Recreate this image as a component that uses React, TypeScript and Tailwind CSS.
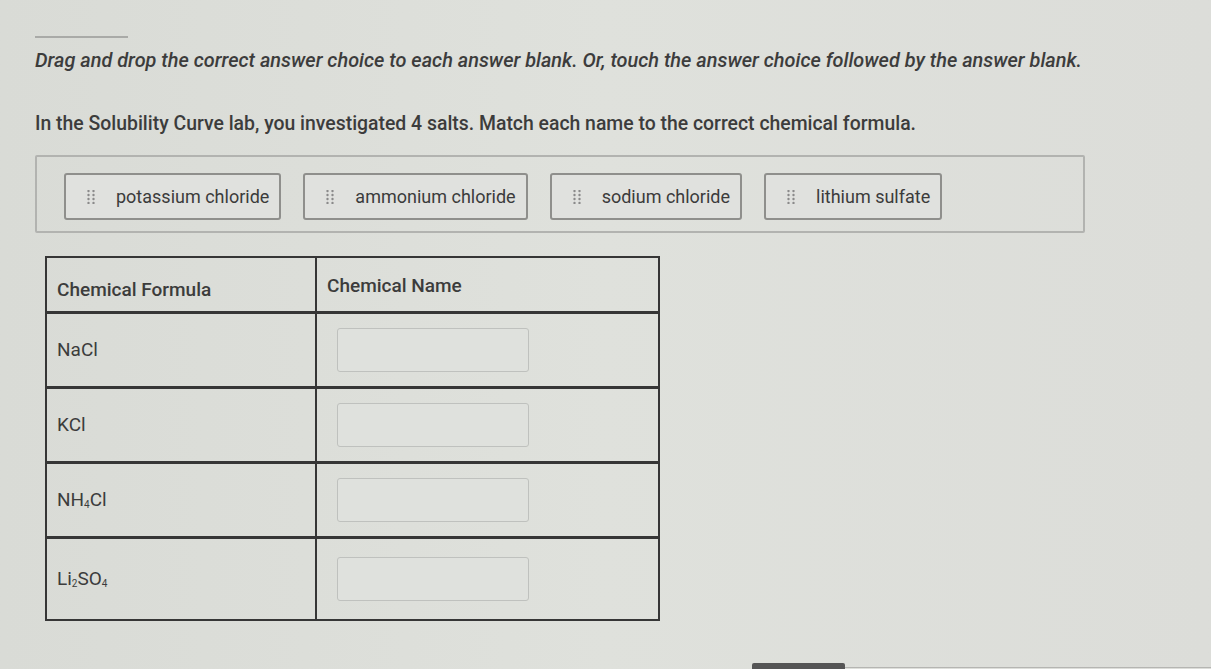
import React from "react";

const choices = ["potassium chloride", "ammonium chloride", "sodium chloride", "lithium sulfate"];

const GripIcon = () => (
    <svg width="8" height="14" viewBox="0 0 8 14" className="shrink-0">
        {[1, 5, 9, 13].map(y => (
            <g key={y}>
                <circle cx="1.5" cy={y} r="1.2" fill="#8a8a8a" />
                <circle cx="6.5" cy={y} r="1.2" fill="#8a8a8a" />
            </g>
        ))}
    </svg>
);

const Chip = ({ label }: { label: string }) => (
    <div className="flex items-center gap-[21px] h-[47px] pl-[21px] pr-[10px] border-2 border-[#8f8f8c] rounded-[3px] bg-[#e0e1de]">
        <GripIcon />
        <span className="text-[18px] text-[#3b3b3b]">{label}</span>
    </div>
);

const DropBox = () => (
    <div className="w-[192px] h-[44px] border border-[#bfc1be] rounded-[3px] bg-[#dfe1dd]" />
);

const rows: React.ReactNode[] = [
    <>NaCl</>,
    <>KCl</>,
    <>NH<sub className="text-[10px]">4</sub>Cl</>,
    <>Li<sub className="text-[10px]">2</sub>SO<sub className="text-[10px]">4</sub></>,
];

export default function App() {
    return (
        <div
            className="w-[1211px] h-[669px] overflow-hidden bg-gradient-to-r from-[#d9dbd6] via-[#dfe1dc] to-[#dcddd9] text-[#3c3c3c] relative"
            style={{ fontFamily: "Roboto, 'Liberation Sans', sans-serif" }}
        >
            <div className="pl-[35px] pt-[36px]">
                {/* divider above instructions */}
                <div className="w-[93px] h-[2px] bg-[#a9aaa7]" />

                <p className="mt-[8px] text-[19.9px] font-medium italic">
                    Drag and drop the correct answer choice to each answer blank. Or, touch the answer choice followed by the answer blank.
                </p>

                <p className="mt-[33px] text-[19.4px] font-medium">
                    In the Solubility Curve lab, you investigated 4 salts. Match each name to the correct chemical formula.
                </p>

                {/* answer bank */}
                <div className="mt-[17px] w-[1050px] h-[78px] border-2 border-[#b2b3b0] rounded-[2px] flex items-center gap-[22px] pl-[27px] pt-[6px]">
                    {choices.map(c => <Chip key={c} label={c} />)}
                </div>

                {/* table */}
                <div className="mt-[23px] ml-[10px] w-[615px] border-2 border-[#363636]">
                    <div className="grid grid-cols-[270px_1fr] h-[56px] border-b-[3px] border-[#363636]">
                        <div className="border-r-2 border-[#363636] pl-[10px] pt-[18px] text-[19px] font-medium">Chemical Formula</div>
                        <div className="pl-[10px] pt-[14px] text-[19px] font-medium">Chemical Name</div>
                    </div>
                    {rows.map((r, i) => (
                        <div
                            key={i}
                            className={`grid grid-cols-[270px_1fr] ${i < rows.length - 1 ? "h-[75px] border-b-[3px] border-[#363636]" : "h-[80px]"}`}
                        >
                            <div className="border-r-2 border-[#363636] pl-[10px] flex items-center text-[19px]">
                                <span>{r}</span>
                            </div>
                            <div className="pl-[20px] flex items-center">
                                <DropBox />
                            </div>
                        </div>
                    ))}
                </div>
            </div>

            {/* bottom bar partially visible */}
            <div className="absolute left-[752px] bottom-0 w-[93px] h-[6px] bg-[#555] rounded-t-[2px]" />
            <div className="absolute left-[845px] right-0 bottom-[1px] h-[1px] bg-[#b5b5b2]" />
        </div>
    );
}
